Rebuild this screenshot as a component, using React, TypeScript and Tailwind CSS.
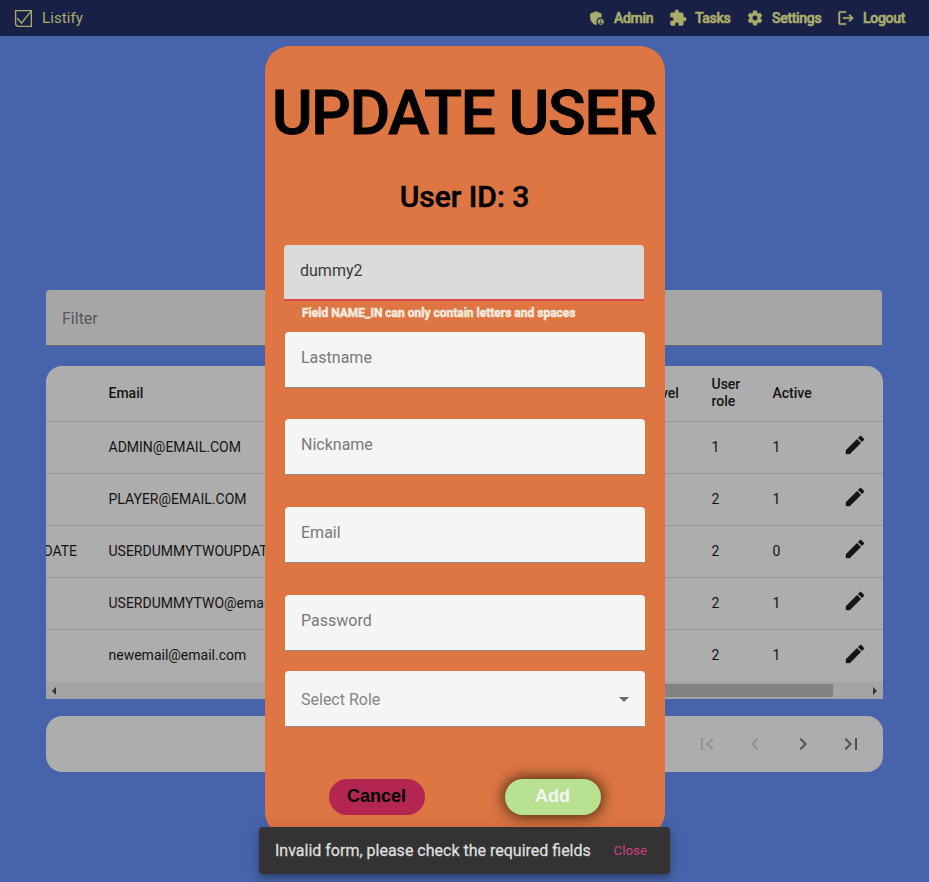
import React from 'react';
import {
  MdAdminPanelSettings,
  MdArrowDropDown,
  MdChevronLeft,
  MdChevronRight,
  MdExtension,
  MdFirstPage,
  MdLastPage,
  MdLogout,
  MdSettings,
} from 'react-icons/md';

const navItems = [
  { label: 'Admin', Icon: MdAdminPanelSettings, width: 'w-[81px]', stroke: 0.3 },
  { label: 'Tasks', Icon: MdExtension, width: 'w-[77px]', stroke: 0.7 },
  { label: 'Settings', Icon: MdSettings, width: 'w-[91px]', stroke: 0.6 },
  { label: 'Logout', Icon: MdLogout, width: 'w-[83px]', stroke: 0.5 },
];

const rows = [
  { name: '', email: 'ADMIN@EMAIL.COM', role: 1, active: 1 },
  { name: '', email: 'PLAYER@EMAIL.COM', role: 2, active: 1 },
  { name: 'UPDATE', email: 'USERDUMMYTWOUPDATE@EMAIL.COM', role: 2, active: 0 },
  { name: '', email: 'USERDUMMYTWO@email.com', role: 2, active: 1 },
  { name: '', email: 'newemail@email.com', role: 2, active: 1 },
];

const columns = 'grid grid-cols-[62.5px_537.5px_65.5px_61px_70.5px_40px] items-center';

function Navbar() {
  return (
    <header className="flex h-9 items-center bg-[#192045] text-[#a9ad6b]">
      <svg className="ml-[14px] h-[18px] w-[18px]" viewBox="0 0 18 18" fill="none" stroke="currentColor" strokeWidth="1.4">
        <path d="M1.6 1.6h15.8v15.8H3.6l-2-2z" />
        <path d="M3.4 9.2l4 4.9L17 2.4" />
      </svg>
      <span className="ml-[10px] text-[15px] tracking-[0.1px]">Listify</span>
      <nav className="ml-auto flex pr-[9px]">
        {navItems.map(({ label, Icon, width, stroke }) => (
          <a key={label} className={`flex items-center ${width}`}>
            <Icon className="h-[18px] w-[18px] shrink-0 [&_[fill=none]]:stroke-none" strokeWidth={stroke} />
            <span className="ml-2 text-[14px] leading-5 font-medium tracking-[-0.3px] [-webkit-text-stroke:0.6px_#a9ad6b]">{label}</span>
          </a>
        ))}
      </nav>
    </header>
  );
}

function PencilIcon({ className }: { className: string }) {
  return (
    <svg className={className} viewBox="0 0 24 24" fill="currentColor" stroke="currentColor" strokeWidth="0.4">
      <path d="M3 17.25V21h3.75L17.81 9.94l-3.75-3.75L3 17.25zM20.71 7.04a1 1 0 0 0 0-1.41l-2.34-2.34a1 1 0 0 0-1.41 0l-1.83 1.83 3.75 3.75 1.83-1.83z" />
    </svg>
  );
}

function UsersTable() {
  return (
    <section className="mt-5 h-[333px] w-[837px] overflow-hidden rounded-t-[16px] bg-[#adadad] text-[14px] text-[#141414]">
      <div className={`${columns} h-14 border-b border-[#979797] leading-[17px] font-medium`}>
        <span />
        <span>Email</span>
        <span>Level</span>
        <span className="-mt-0.5">User<br />role</span>
        <span>Active</span>
      </div>
      {rows.map((row) => (
        <div key={row.email} className={`group ${columns} h-[52px] border-b border-[#979797] last-of-type:border-transparent`}>
          <span className="flex justify-end pr-[31.5px]">{row.name}</span>
          <span>{row.email}</span>
          <span />
          <span>{row.role}</span>
          <span>{row.active}</span>
          <PencilIcon className="mb-1.5 h-6 w-6 group-last-of-type:mb-1" />
        </div>
      ))}
      <footer className="flex h-[17px] items-center justify-between bg-[#a4a4a4] px-[6px]">
        <i className="border-y-4 border-r-[4px] border-y-transparent border-r-[#353535]" />
        <i className="mr-[40px] ml-auto h-[13px] w-[360px] bg-[#828282]" />
        <i className="border-y-4 border-l-[4px] border-y-transparent border-l-[#353535]" />
      </footer>
    </section>
  );
}

function Paginator() {
  return (
    <section className="mt-[17px] flex h-14 w-[837px] items-center justify-end gap-6 rounded-[16px] bg-[#adadad] pr-5 text-[#505050]">
      <MdFirstPage className="h-6 w-6 text-[#929292]" />
      <MdChevronLeft className="h-6 w-6 text-[#929292]" />
      <MdChevronRight className="h-6 w-6" />
      <MdLastPage className="h-6 w-6" />
    </section>
  );
}

function Field({ label, className }: { label: string; className: string }) {
  return (
    <div className={`h-14 w-[360px] rounded-t border-b border-[#8c8c8c] bg-[#f5f5f5] px-4 pt-[14px] text-[16px] leading-6 text-[#797979] ${className}`}>
      {label}
    </div>
  );
}

function UpdateUserDialog() {
  return (
    <div role="dialog" className="absolute top-[46px] left-[265px] flex h-[791px] w-[400px] flex-col items-center rounded-[25px] bg-[#de7643]">
      <h1 className="mt-[35px] mr-[2px] text-[62px] leading-[64px] font-medium tracking-[-1.25px] whitespace-nowrap text-black [-webkit-text-stroke:1px_black]">UPDATE USER</h1>
      <h2 className="mt-[33px] mr-px text-[30px] leading-[38px] font-medium text-black [-webkit-text-stroke:0.5px_black]">User ID: 3</h2>
      <div className="mt-[29px] mr-[2px] h-14 w-[360px] rounded-t border-b-2 border-[#d64c43] bg-[#dbdbdb] px-4 pt-[14px] text-[16px] leading-6 text-[#3a3a3a]">dummy2</div>
      <p className="mt-[4px] w-full pl-[37px] text-[12px] leading-4 font-bold text-[#f7eadf] [-webkit-text-stroke:0.5px_#f7eadf]">Field NAME_IN can only contain letters and spaces</p>
      <Field label="Lastname" className="mt-[11px]" />
      <Field label="Nickname" className="mt-[31px]" />
      <Field label="Email" className="mt-8" />
      <Field label="Password" className="mt-8" />
      <div className="mt-5 flex h-14 w-[360px] items-center rounded-t border-b border-[#8c8c8c] bg-[#f5f5f5] pr-[9px] pl-4 text-[16px] text-[#858585]">
        <span className="pt-0.5">Select Role</span>
        <MdArrowDropDown className="ml-auto h-6 w-6 text-[#6b6b6b]" />
      </div>
      <div className="mt-[52px] flex w-[272px] justify-between font-['Liberation_Sans',Arial,sans-serif] text-[18px] font-bold">
        <button className="h-9 w-24 rounded-full bg-[#b32651] pr-[1px] pb-[2px] text-black">Cancel</button>
        <button className="h-9 w-24 rounded-full bg-[#b8e191] pr-[1px] pb-[2px] text-[#f5f5f5] shadow-[0_0_14px_2px_rgba(35,25,0,0.8)]">Add</button>
      </div>
    </div>
  );
}

function Snackbar() {
  return (
    <div role="status" className="absolute top-[827px] left-[259px] flex h-[47px] w-[411px] items-center rounded bg-[#333333] pl-4 shadow-[0_3px_5px_-1px_rgba(0,0,0,0.2),0_6px_10px_rgba(0,0,0,0.14),0_1px_18px_rgba(0,0,0,0.12)]">
      <span className="text-[16px] whitespace-nowrap text-[#dedede] [-webkit-text-stroke:0.3px_#dedede]">Invalid form, please check the required fields</span>
      <button className="ml-auto pr-[23px] text-[13.3px] text-[#d33d7d]">Close</button>
    </div>
  );
}

export default function App() {
  return (
    <div className="relative h-[882px] w-[929px] overflow-hidden bg-[#4763ab] font-[Roboto,sans-serif]">
      <Navbar />
      <main className="pt-[254px] pl-[46px]">
        <div className="flex h-14 w-[836px] items-center rounded-t border-b border-[#666666] bg-[#a6a6a6] px-4 pt-0.5 text-[16px] text-[#575757]">Filter</div>
        <UsersTable />
        <Paginator />
      </main>
      <UpdateUserDialog />
      <Snackbar />
    </div>
  );
}
